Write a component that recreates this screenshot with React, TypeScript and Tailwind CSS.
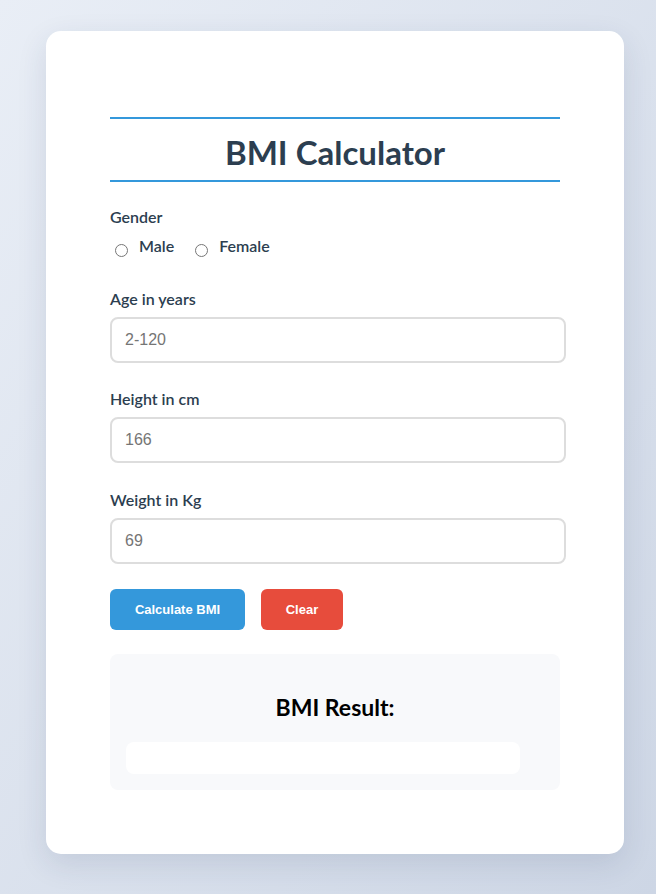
import React from "react";

export default function App() {
  const seg = { fontFamily: "Lato, 'Noto Sans', sans-serif" };
  const arial = { fontFamily: "'Liberation Sans', Arial, sans-serif" };
  return (
    <div className="min-h-[894px] w-full bg-gradient-to-br from-[#e9eef6] to-[#cdd6e5] pt-[31px] pb-[40px]" style={seg}>
      <div className="ml-[46px] w-[578px] h-[823px] rounded-[15px] bg-white shadow-[0_10px_30px_rgba(30,50,90,0.12)] px-[64px] pt-[86px]">
        <h1 className="border-y-2 border-[#3498db] pt-[13px] pb-[7px] text-center text-[33px] leading-[41px] font-bold text-[#2c3e50]">
          BMI Calculator
        </h1>
        <div className="mt-[24px]">
          <div className="text-[16px] leading-[22px] font-semibold text-[#2c3e50]">Gender</div>
          <div className="mt-[7px] flex h-[22px] items-center text-[16px] font-semibold text-[#2c3e50]">
            <label className="flex items-center">
              <input type="radio" name="g" className="ml-[5px] mr-[11px] mt-[8px] h-[13px] w-[13px]" />
              <span>Male</span>
            </label>
            <label className="ml-[21px] flex items-center">
              <input type="radio" name="g" className="mr-[11px] mt-[8px] h-[13px] w-[13px]" />
              <span>Female</span>
            </label>
          </div>
        </div>
        {[
          ["Age in years", "2-120", "mt-[31px]"],
          ["Height in cm", "166", "mt-[25px]"],
          ["Weight in Kg", "69", "mt-[26px]"],
        ].map(([label, ph, mt]) => (
          <div key={label} className={mt}>
            <div className="text-[16px] leading-[22px] font-semibold text-[#2c3e50]">{label}</div>
            <input
              placeholder={ph}
              className="mt-[7px] block h-[46px] w-[456px] rounded-[8px] border-2 border-[#dddddd] px-[13px] text-[16px] text-[#333] placeholder:text-[#757575] outline-none"
              style={arial}
            />
          </div>
        ))}
        <div className="mt-[25px] flex gap-[16px]" style={arial}>
          <button className="h-[41px] w-[135px] rounded-[6px] bg-[#3498db] text-[13px] font-bold text-white">
            Calculate BMI
          </button>
          <button className="h-[41px] w-[82px] rounded-[6px] bg-[#e74c3c] text-[13px] font-bold text-white">
            Clear
          </button>
        </div>
        <div className="mt-[24px] h-[136px] w-[450px] rounded-[8px] bg-[#f8f9fb] px-[16px] pt-[38px]">
          <div className="text-center text-[23px] leading-[30px] font-bold text-black">BMI Result:</div>
          <div className="mt-[20px] h-[32px] w-[394px] rounded-[8px] bg-white"></div>
        </div>
      </div>
    </div>
  );
}
